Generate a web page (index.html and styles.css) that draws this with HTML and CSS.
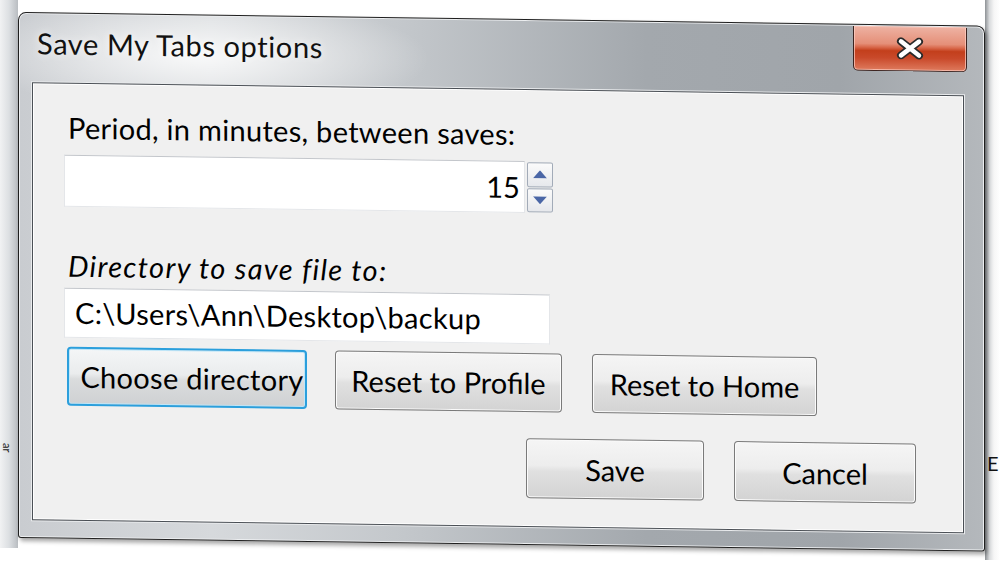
FILE: index.html
```html
<!DOCTYPE html>
<html lang="en">
<head>
<meta charset="utf-8">
<title>Save My Tabs options</title>
<link rel="stylesheet" href="styles.css">
</head>
<body>
<div class="screen">
  <div class="desk-left"><span class="frag">ar</span></div>
  <div class="dialog">
    <div class="titlebar">
      <span class="title">Save My Tabs options</span>
      <button class="close" type="button" aria-label="Close">
        <svg width="30" height="22" viewBox="0 0 30 22">
          <path d="M6 4 L24 18 M24 4 L6 18" stroke="#2a2a2a" stroke-width="8" stroke-linecap="round" fill="none"/>
          <path d="M6 4 L24 18 M24 4 L6 18" stroke="#ffffff" stroke-width="4.5" stroke-linecap="round" fill="none"/>
        </svg>
      </button>
    </div>
    <div class="client">
      <div class="label">Period, in minutes, between saves:</div>
      <div class="spin-row">
        <div class="field num">15</div>
        <div class="spinner">
          <span class="spin-btn"><svg width="14" height="8" viewBox="0 0 14 8"><path d="M7 0 L14 8 L0 8 Z" fill="#4a66a6"/></svg></span>
          <span class="spin-btn"><svg width="14" height="8" viewBox="0 0 14 8"><path d="M0 0 L14 0 L7 8 Z" fill="#4a66a6"/></svg></span>
        </div>
      </div>
      <div class="label italic">Directory to save file to:</div>
      <div class="field path">C:\Users\Ann\Desktop\backup</div>
      <div class="btn-row">
        <button class="btn focus w-choose" type="button">Choose directory</button>
        <button class="btn w-profile" type="button">Reset to Profile</button>
        <button class="btn w-home" type="button">Reset to Home</button>
      </div>
      <div class="btn-row end">
        <button class="btn w-save" type="button">Save</button>
        <button class="btn w-cancel" type="button">Cancel</button>
      </div>
    </div>
  </div>
  <div class="desk-right"><span class="frag-e">E</span></div>
</div>
</body>
</html>
```

FILE: styles.css
```css
html, body {
  margin: 0;
  padding: 0;
  background: #ffffff;
}

.screen {
  display: flex;
  width: 1000px;
  height: 564px;
  overflow: hidden;
  font-family: Lato, "Open Sans", sans-serif;
  color: #000;
}

.desk-left {
  width: 18px;
  flex: none;
  height: 548px;
  background: linear-gradient(to right, #f1f2f3 0%, #dcdfe2 50%, #b9bdc1 100%);
  display: flex;
  align-items: flex-end;
  justify-content: center;
  padding-bottom: 96px;
  box-sizing: border-box;
}

.frag {
  font-size: 11px;
  line-height: 11px;
  writing-mode: vertical-rl;
  color: #222;
  padding-right: 4px;
}

.desk-right {
  flex: 1;
  height: 560px;
  background: linear-gradient(to right, #8d9195 0%, #d9dbdd 30%, #f6f6f6 60%, #ffffff 100%);
  display: flex;
  align-items: flex-start;
  padding-top: 452px;
  box-sizing: border-box;
}

.frag-e {
  font-size: 20px;
  line-height: 22px;
  margin-left: 2px;
  color: #111;
}

.dialog {
  flex: none;
  width: 967px;
  height: 526px;
  margin-top: 12px;
  box-sizing: border-box;
  border: 1px solid #1f1f1f;
  border-radius: 8px 8px 3px 3px;
  box-shadow: inset 0 0 0 1px #eceef0, 2px 3px 4px rgba(0,0,0,0.35);
  background:
    radial-gradient(ellipse 230px 60px at 180px 40px, rgba(255,255,255,0.85), rgba(255,255,255,0) 100%),
    linear-gradient(to right, #c9ccd0 0%, #d6d9dc 20%, #c3c7cb 40%, #a3a8ad 65%, #a0a5aa 85%, #b4b8bc 100%);
  display: flex;
  flex-direction: column;
  transform: skewY(0.8deg);
  transform-origin: 0 0;
}

.titlebar {
  height: 69px;
  flex: none;
  display: flex;
  align-items: flex-start;
  padding-left: 18px;
  padding-right: 17px;
}

.title {
  margin-top: 13px;
  font-size: 29px;
  line-height: 34px;
  letter-spacing: 0.6px;
  color: #111;
  text-shadow: 0 0 8px rgba(255,255,255,0.9);
}

.close {
  margin-left: auto;
  margin-top: 1px;
  width: 114px;
  height: 45px;
  padding: 0;
  border: 1px solid #3d2420;
  border-top: none;
  border-radius: 0 0 5px 5px;
  box-shadow: inset 0 0 0 1px rgba(255,210,200,0.7);
  background: linear-gradient(to bottom, #eeb3a4 0%, #e58f78 40%, #d9694c 48%, #c33f1c 56%, #c9492a 72%, #de7a5d 100%);
  display: flex;
  align-items: center;
  justify-content: center;
}

.client {
  flex: 1;
  margin: 0 20px 17px 13px;
  border: 1px solid #4a4f55;
  box-shadow: inset 0 0 0 1px #ffffff, 0 0 0 1px #e9ebed;
  background: #f0f0f0;
  padding: 27px 0 0 31px;
  display: flex;
  flex-direction: column;
  align-items: flex-start;
}

.label {
  font-size: 29px;
  line-height: 34px;
  margin-left: 4px;
  letter-spacing: 0.3px;
}

.label.italic {
  font-style: italic;
  margin-top: 42px;
  margin-left: 4px;
  letter-spacing: 1.3px;
}

.spin-row {
  display: flex;
  align-items: flex-start;
  margin-top: 10px;
}

.field {
  background: #ffffff;
  border: 1px solid #e4e6e9;
  border-top-color: #c3c6cb;
  box-sizing: border-box;
  font-size: 29px;
  letter-spacing: 0.1px;
}

.num {
  width: 461px;
  height: 52px;
  line-height: 50px;
  text-align: right;
  padding-right: 4px;
}

.spinner {
  margin-left: 2px;
  margin-top: 1px;
  width: 26px;
  height: 50px;
  display: flex;
  flex-direction: column;
  gap: 1px;
}

.spin-btn {
  flex: 1;
  box-sizing: border-box;
  border: 1px solid #a2abb8;
  border-radius: 2px;
  background: linear-gradient(to bottom, #fbfbfb, #e6e8ec);
  display: flex;
  align-items: center;
  justify-content: center;
}

.path {
  margin-top: 5px;
  width: 486px;
  height: 50px;
  line-height: 48px;
  padding-left: 10px;
  letter-spacing: 0.3px;
}

.btn-row {
  display: flex;
  gap: 28px;
  margin-top: 9px;
  margin-left: 3px;
}

.btn-row.end {
  align-self: stretch;
  justify-content: flex-end;
  gap: 30px;
  margin-top: 26px;
  margin-right: 47px;
}

.btn {
  height: 59px;
  padding: 0;
  box-sizing: border-box;
  font-family: Lato, "Open Sans", sans-serif;
  font-size: 29px;
  letter-spacing: 0;
  color: #000;
  border: 1px solid #7a7a7a;
  border-radius: 4px;
  box-shadow: inset 0 0 0 1px #fbfbfb;
  background: linear-gradient(to bottom, #f5f5f5 0%, #ededed 45%, #e0e0e0 55%, #d3d3d3 100%);
}

.btn.focus {
  border: 2px solid #2b9fdc;
  box-shadow: inset 0 0 0 1px #bfe6f8;
  background: linear-gradient(to bottom, #f4f6f7 0%, #eaeced 45%, #dadcdd 55%, #cfd1d3 100%);
  letter-spacing: 0.3px;
  padding-left: 10px;
}

.w-choose { width: 240px; }
.w-profile { width: 227px; }
.w-home { width: 225px; margin-left: 2px; }
.w-save { width: 178px; height: 60px; }
.w-cancel { width: 182px; height: 60px; }
```
